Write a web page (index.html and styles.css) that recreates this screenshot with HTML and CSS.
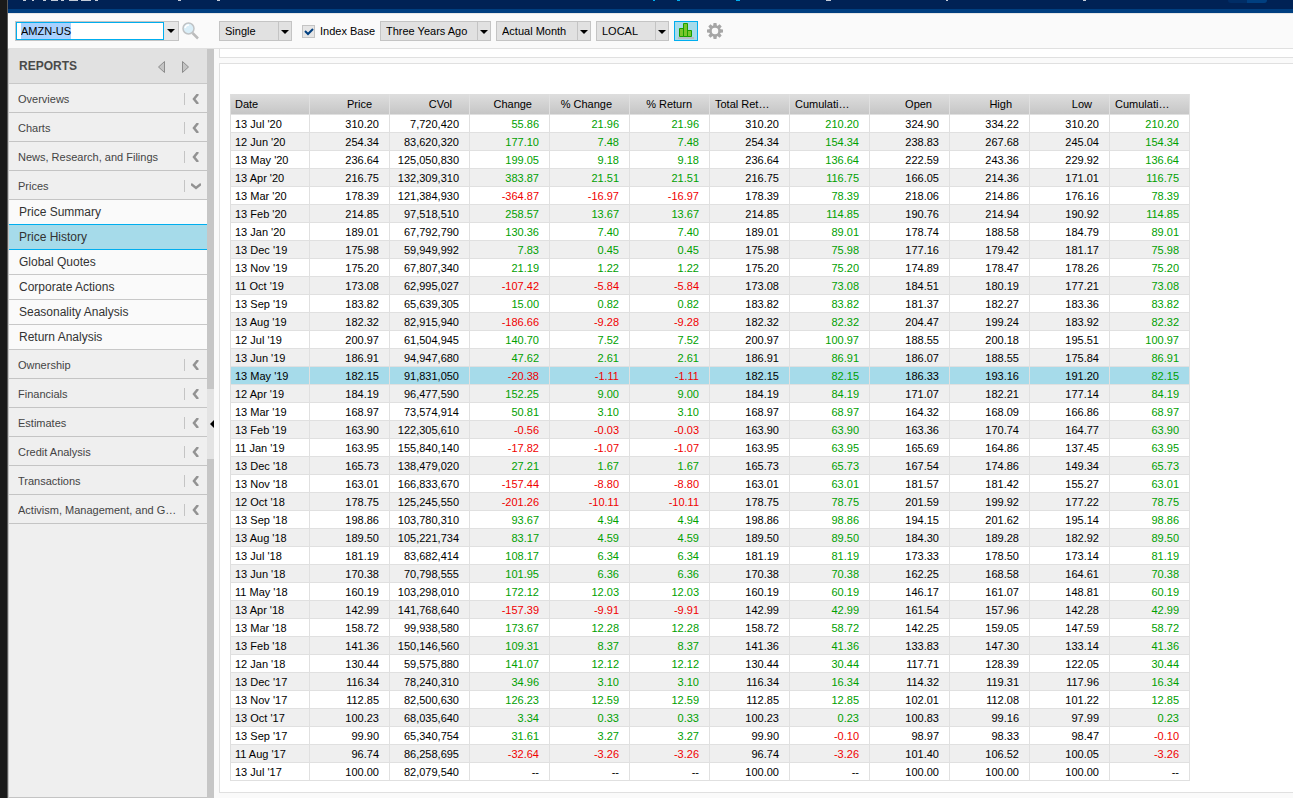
FILE: index.html
```html
<!DOCTYPE html>
<html lang="en">
<head>
<meta charset="utf-8">
<title>Price History</title>
<link rel="stylesheet" href="styles.css">
</head>
<body>
<div class="app">
  <header class="topbar">
    <svg class="topbar-marks" width="1100" height="3" aria-hidden="true">
      <g fill="#c3cbd8"><path d="M15 0h3v1h-3zM24 0h2v1h-2zM35 0h3v1h-3zM43 0h7v1h-7zM53 0h3v1h-3zM61 0h9v1h-9zM73 0h10v1h-10zM87 0h3v1h-3zM170 0h3v1h-3zM209 0h3v1h-3zM818 0h5v1h-5zM938 0h2v1h-2zM1075 0h3v1h-3z"/></g>
      <g fill="#00aeef"><path d="M645 0h2v1h-2zM669 0h3v1h-3zM728 0h4v1h-4z"/></g>
    </svg>
    <span class="topbar-toggle"></span>
  </header>

  <form class="toolbar">
    <div class="symbol">
      <input class="symbol-input" type="text" value="AMZN-US" aria-label="Symbol">
      <button class="symbol-drop" type="button" aria-label="Recent symbols"><svg width="8" height="4" viewBox="0 0 8 4"><path d="M0 0h8L4 4z"/></svg></button>
    </div>
    <button class="icon-btn search" type="button" aria-label="Search">
      <svg width="18" height="18" viewBox="0 0 18 18"><path d="M10.500 11l5.500 5.500" stroke="#bcbcbc" stroke-width="2.500"/><circle cx="6.500" cy="6.500" r="5.500" fill="#d9eef8" stroke="#c0c3c5" stroke-width="1.500"/><path d="M3 6a4 4 0 0 1 4-3" fill="none" stroke="#fff" stroke-width="1.500"/></svg>
    </button>
    <select class="select w-short" aria-label="Mode"><option>Single</option></select>
    <label class="check"><input type="checkbox" checked>Index Base</label>
    <select class="select w-long" aria-label="Period"><option>Three Years Ago</option></select>
    <select class="select w-mid" aria-label="Frequency"><option>Actual Month</option></select>
    <select class="select w-short" aria-label="Currency"><option>LOCAL</option></select>
    <button class="chart-btn" type="button" aria-label="Chart">
      <svg width="16" height="16" viewBox="0 0 16 16"><path d="M0 14h16v2H0z" fill="#b5bfc3"/><path d="M1.500 5.500h4v8h-4zM5.500 .5h4v13h-4zM9.500 7.500h4v6h-4z" fill="#7ac52c" stroke="#18a000"/></svg>
    </button>
    <button class="icon-btn gear" type="button" aria-label="Settings">
      <svg width="16" height="16" viewBox="-8 -8 16 16"><g fill="#a6a6a6"><path d="M-1.500-8h3l.5 4h-4zM-1.500 8h3l.5-4h-4z"/><path d="M-1.500-8h3l.5 4h-4zM-1.500 8h3l.5-4h-4z" transform="rotate(45)"/><path d="M-1.500-8h3l.5 4h-4zM-1.500 8h3l.5-4h-4z" transform="rotate(90)"/><path d="M-1.500-8h3l.5 4h-4zM-1.500 8h3l.5-4h-4z" transform="rotate(135)"/></g><circle r="4.500" fill="#fafafa" stroke="#a6a6a6" stroke-width="2.500"/></svg>
    </button>
  </form>

  <div class="workspace">
    <nav class="sidebar" aria-label="Reports">
      <div class="side-head">
        <h2>REPORTS</h2>
        <button type="button" aria-label="Previous"><svg width="7" height="12" viewBox="0 0 7 12"><path d="M6.500 .5v11L.5 6z" fill="#c4c4c4" stroke="#8c8c8c"/></svg></button>
        <button type="button" aria-label="Next"><svg width="7" height="12" viewBox="0 0 7 12"><path d="M.5 .5v11L6.500 6z" fill="#c4c4c4" stroke="#8c8c8c"/></svg></button>
      </div>
      <button class="group" type="button"><span>Overviews</span><i></i></button>
      <button class="group" type="button"><span>Charts</span><i></i></button>
      <button class="group" type="button"><span>News, Research, and Filings</span><i></i></button>
      <button class="group open" type="button" aria-expanded="true"><span>Prices</span><i></i></button>
      <a class="item before-active" href="#">Price Summary</a>
      <a class="item active" href="#">Price History</a>
      <a class="item" href="#">Global Quotes</a>
      <a class="item" href="#">Corporate Actions</a>
      <a class="item" href="#">Seasonality Analysis</a>
      <a class="item" href="#">Return Analysis</a>
      <button class="group" type="button"><span>Ownership</span><i></i></button>
      <button class="group" type="button"><span>Financials</span><i></i></button>
      <button class="group" type="button"><span>Estimates</span><i></i></button>
      <button class="group" type="button"><span>Credit Analysis</span><i></i></button>
      <button class="group" type="button"><span>Transactions</span><i></i></button>
      <button class="group" type="button"><span>Activism, Management, and Governance</span><i></i></button>
    </nav>
    <div class="splitter"><button type="button" aria-label="Collapse sidebar"><svg width="4" height="8" viewBox="0 0 4 8"><path d="M4 0v8L0 4z"/></svg></button></div>
    <main class="content">
      <section class="panel strip"></section>
      <section class="panel report">
        <table class="prices">
          <thead>
            <tr><th class="left">Date</th><th>Price</th><th>CVol</th><th>Change</th><th>% Change</th><th>% Return</th><th class="left">Total Return</th><th class="left">Cumulative Return</th><th>Open</th><th>High</th><th>Low</th><th class="left">Cumulative Change</th></tr>
          </thead>
          <tbody id="rows"></tbody>
        </table>
      </section>
    </main>
  </div>
</div>
<script src="prices.js"></script>
</body>
</html>
```
FILE: styles.css
```css
* { box-sizing: border-box; }
html, body { height: 100%; }
body { margin: 0; background: #1a1a1a; padding-left: 7px; overflow: hidden; font: 11px/18px "Liberation Sans", Arial, sans-serif; color: #000; }
button, input, select { font: inherit; color: inherit; margin: 0; padding: 0; border: 0; border-radius: 0; background: none; }
button { cursor: pointer; }
svg { display: block; }

.app { display: flex; flex-direction: column; height: 100%; border-left: 1px solid #5c5c5c; background: #fafafa; }

.topbar { position: relative; flex: none; height: 13px; background: #002255; border-bottom: 4px solid #003f80; }
.topbar-marks { position: absolute; left: 0; top: 0; }
.topbar-toggle { position: absolute; right: 26px; top: 0; width: 39px; height: 3px; border-radius: 0 0 4px 4px; background: linear-gradient(90deg, #002d66 50%, #003f80 50%); }

.toolbar { display: flex; align-items: center; flex: none; height: 36px; padding: 0 7px; border-top: 1px solid #e6e6e6; border-bottom: 1px solid #e0e0e0; }
.symbol { display: flex; width: 164px; height: 20px; border: 1px solid #c4c4c4; }
.symbol-input { flex: 1; min-width: 0; border: 1px solid #00aeef; padding: 0 4px; background: #fff; outline: none; }
.symbol-input::selection { background: #a8d1ff; color: #000; }
.symbol-drop { display: grid; place-items: center; width: 14px; background: #e6e6e6; }
.icon-btn { display: grid; place-items: center; }
.search { margin: 0 19px 0 3px; }
.select { appearance: none; height: 20px; padding: 0 18px 0 5px; border: 1px solid #c4c4c4; margin-right: 5px;
  background: url("data:image/svg+xml,%3Csvg xmlns='http://www.w3.org/2000/svg' width='13' height='18'%3E%3Cpath d='M0 0h1v18H0z' fill='%23c4c4c4'/%3E%3Cpath d='M3 8h8l-4 4z'/%3E%3C/svg%3E") right center no-repeat #e1e1e1; }
.w-short { width: 73px; }
.w-mid { width: 95px; }
.w-long { width: 111px; }
.check { display: flex; align-items: center; gap: 5px; width: 78px; margin-left: 5px; margin-right: 0; white-space: nowrap; }
.check input { appearance: none; flex: none; width: 13px; height: 13px; border: 1px solid #c4c4c4;
  background: url("data:image/svg+xml,%3Csvg xmlns='http://www.w3.org/2000/svg' width='11' height='11'%3E%3Cpath d='M2 5l3 3 5-5' fill='none' stroke='%23003f80' stroke-width='2'/%3E%3C/svg%3E") center no-repeat #e6e6e6; }
.chart-btn { display: grid; place-items: center; width: 24px; height: 20px; border: 1px solid #00aeef; background: #a6dbea; }
.gear { margin-left: 9px; }

.workspace { display: flex; flex: 1; min-height: 0; }
.sidebar { display: flex; flex-direction: column; flex: none; width: 199px; background: #efefef; border-bottom: 1px solid #c4c4c4; border-left: 1px solid #c4c4c4; color: #333; }
.side-head { display: flex; align-items: center; gap: 17px; height: 35px; padding: 0 18px 0 10px; background: #e1e1e1; border-bottom: 1px solid #c8c8c8; }
.side-head h2 { flex: 1; margin: 0; font-size: 12px; line-height: 18px; color: #4a4a4a; }
.side-head button { padding-top: 2px; }
.group { display: flex; align-items: center; height: 29px; padding: 2px 4px 0 9px; border-bottom: 1px solid #c4c4c4; text-align: left; color: #444; }
.group span { flex: 1; overflow: hidden; white-space: nowrap; text-overflow: ellipsis; }
.group i { flex: none; width: 19px; height: 12px; margin-left: 6px; border-left: 1px solid #c4c4c4;
  background: url("data:image/svg+xml,%3Csvg xmlns='http://www.w3.org/2000/svg' width='7' height='10'%3E%3Cpath d='M6 0L2 5l4 5' fill='none' stroke='%23929292' stroke-width='2.500'/%3E%3C/svg%3E") 7px center no-repeat; }
.group.open i { background-image: url("data:image/svg+xml,%3Csvg xmlns='http://www.w3.org/2000/svg' width='10' height='7'%3E%3Cpath d='M0 1l5 4 5-4' fill='none' stroke='%23929292' stroke-width='2.500'/%3E%3C/svg%3E"); background-position: 6px center; }
.item { height: 25px; padding-left: 10px; border-bottom: 1px solid #c8c8c8; background: #fafafa; font-size: 12px; line-height: 24px; color: #333; text-decoration: none; }
.item.active { background: #a6dbea; }
.item.before-active, .item.active { border-color: #00aeef; }

.splitter { display: flex; align-items: center; flex: none; width: 7px; background: #c6c6c6; }
.splitter button { display: flex; align-items: center; justify-content: flex-end; width: 7px; height: 70px; background: #e3e3e3; }

.content { display: flex; flex-direction: column; flex: 1; min-width: 0; gap: 5px; padding: 0 0 5px 5px; }
.panel { background: #fff; border: 1px solid #e0e0e0; border-right: 0; }
.strip { flex: none; height: 9px; border-top: 0; }
.report { flex: 1; min-height: 0; padding: 30px 10px 0; }

.prices { width: 960px; table-layout: fixed; border-collapse: separate; border-spacing: 0; }
.prices th, .prices td { overflow: hidden; white-space: nowrap; text-overflow: ellipsis; text-align: right; border-right: 1px solid #e0e0e0; border-bottom: 1px solid #e0e0e0; }
.prices th { height: 21px; padding: 0 17px 0 5px; font-weight: normal; line-height: 20px; background: linear-gradient(#dedede, #c6c6c6); }
.prices td { height: 18px; padding: 1px 10px 0 0; line-height: 16px; }
.prices th.left, .prices td:first-child { text-align: left; padding-left: 5px; }
.prices th:first-child, .prices td:first-child { padding-left: 4px; border-left: 1px solid #dedede; }
.prices tbody tr:nth-child(even) { background: #efefef; }
.prices tbody tr.selected { background: #a6dbea; }
.prices .up { color: #00a000; }
.prices .down { color: #f00000; }
```
FILE: prices.js
```js
// date | price | volume | change | % change | cumulative | open | high | low
const data = `13 Jul '20|310.20|7,720,420|55.86|21.96|210.20|324.90|334.22|310.20
12 Jun '20|254.34|83,620,320|177.10|7.48|154.34|238.83|267.68|245.04
13 May '20|236.64|125,050,830|199.05|9.18|136.64|222.59|243.36|229.92
13 Apr '20|216.75|132,309,310|383.87|21.51|116.75|166.05|214.36|171.01
13 Mar '20|178.39|121,384,930|-364.87|-16.97|78.39|218.06|214.86|176.16
13 Feb '20|214.85|97,518,510|258.57|13.67|114.85|190.76|214.94|190.92
13 Jan '20|189.01|67,792,790|130.36|7.40|89.01|178.74|188.58|184.79
13 Dec '19|175.98|59,949,992|7.83|0.45|75.98|177.16|179.42|181.17
13 Nov '19|175.20|67,807,340|21.19|1.22|75.20|174.89|178.47|178.26
11 Oct '19|173.08|62,995,027|-107.42|-5.84|73.08|184.51|180.19|177.21
13 Sep '19|183.82|65,639,305|15.00|0.82|83.82|181.37|182.27|183.36
13 Aug '19|182.32|82,915,940|-186.66|-9.28|82.32|204.47|199.24|183.92
12 Jul '19|200.97|61,504,945|140.70|7.52|100.97|188.55|200.18|195.51
13 Jun '19|186.91|94,947,680|47.62|2.61|86.91|186.07|188.55|175.84
13 May '19|182.15|91,831,050|-20.38|-1.11|82.15|186.33|193.16|191.20
12 Apr '19|184.19|96,477,590|152.25|9.00|84.19|171.07|182.21|177.14
13 Mar '19|168.97|73,574,914|50.81|3.10|68.97|164.32|168.09|166.86
13 Feb '19|163.90|122,305,610|-0.56|-0.03|63.90|163.36|170.74|164.77
11 Jan '19|163.95|155,840,140|-17.82|-1.07|63.95|165.69|164.86|137.45
13 Dec '18|165.73|138,479,020|27.21|1.67|65.73|167.54|174.86|149.34
13 Nov '18|163.01|166,833,670|-157.44|-8.80|63.01|181.57|181.42|155.27
12 Oct '18|178.75|125,245,550|-201.26|-10.11|78.75|201.59|199.92|177.22
13 Sep '18|198.86|103,780,310|93.67|4.94|98.86|194.15|201.62|195.14
13 Aug '18|189.50|105,221,734|83.17|4.59|89.50|184.30|189.28|182.92
13 Jul '18|181.19|83,682,414|108.17|6.34|81.19|173.33|178.50|173.14
13 Jun '18|170.38|70,798,555|101.95|6.36|70.38|162.25|168.58|164.61
11 May '18|160.19|103,298,010|172.12|12.03|60.19|146.17|161.07|148.81
13 Apr '18|142.99|141,768,640|-157.39|-9.91|42.99|161.54|157.96|142.28
13 Mar '18|158.72|99,938,580|173.67|12.28|58.72|142.25|159.05|147.59
13 Feb '18|141.36|150,146,560|109.31|8.37|41.36|133.83|147.30|133.14
12 Jan '18|130.44|59,575,880|141.07|12.12|30.44|117.71|128.39|122.05
13 Dec '17|116.34|78,240,310|34.96|3.10|16.34|114.32|119.31|117.96
13 Nov '17|112.85|82,500,630|126.23|12.59|12.85|102.01|112.08|101.22
13 Oct '17|100.23|68,035,640|3.34|0.33|0.23|100.83|99.16|97.99
13 Sep '17|99.90|65,340,754|31.61|3.27|-0.10|98.97|98.33|98.47
11 Aug '17|96.74|86,258,695|-32.64|-3.26|-3.26|101.40|106.52|100.05
13 Jul '17|100.00|82,079,540|--|--|--|100.00|100.00|100.00`;

const plain = v => `<td>${v}</td>`;
const signed = v => v === "--" ? plain(v) : `<td class="${v[0] === "-" ? "down" : "up"}">${v}</td>`;

document.getElementById("rows").innerHTML = data.split("\n").map(line => {
  const [date, price, vol, chg, pct, cum, open, high, low] = line.split("|");
  return `<tr${date === "13 May '19" ? ' class="selected"' : ""}>` +
    plain(date) + plain(price) + plain(vol) + signed(chg) + signed(pct) + signed(pct) +
    plain(price) + signed(cum) + plain(open) + plain(high) + plain(low) + signed(cum) + "</tr>";
}).join("");

document.querySelector(".symbol-input").select();
```
